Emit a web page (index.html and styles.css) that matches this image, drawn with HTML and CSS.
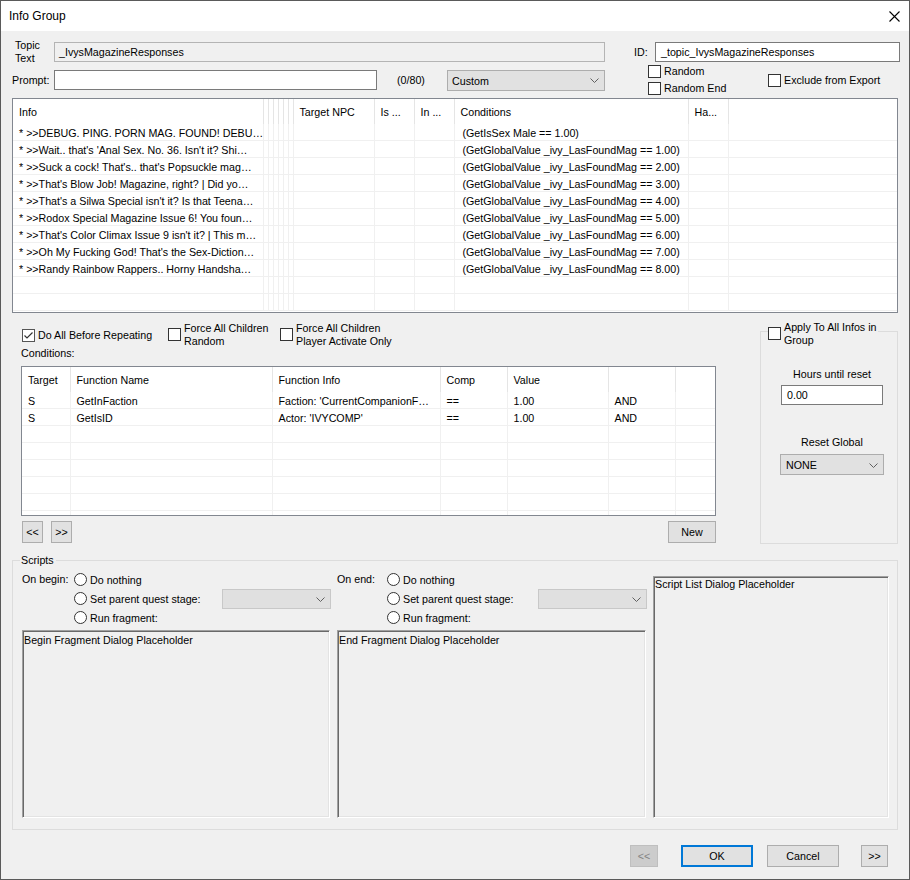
FILE: index.html
```html
<!DOCTYPE html>
<html lang="en">
<head>
    <meta charset="UTF-8">
    <title>Info Group</title>
    <link rel="stylesheet" href="styles.css">
</head>
<body>

<div class="window">
    <div class="titlebar">
        <span>Info Group</span>
        <svg class="close-icon" width="11" height="11" viewBox="0 0 11 11">
            <path d="M0.5 0.5 L10.5 10.5 M10.5 0.5 L0.5 10.5" stroke="#000" stroke-width="1.1" fill="none"/>
        </svg>
    </div>

    <div class="topic-row">
        <label class="topic-label">Topic<br>Text</label>
        <div class="textbox readonly topic-box">_IvysMagazineResponses</div>
        <label class="id-label">ID:</label>
        <div class="textbox id-box">_topic_IvysMagazineResponses</div>
    </div>

    <div class="prompt-row">
        <label class="prompt-label">Prompt:</label>
        <div class="textbox prompt-box"></div>
        <span class="counter">(0/80)</span>
        <div class="combo custom-combo">
            <span>Custom</span>
            <svg class="arrow" width="9" height="5" viewBox="0 0 9 5"><path d="M0.5 0.5 L4.5 4.5 L8.5 0.5" stroke="#606060" fill="none"/></svg>
        </div>
        <div class="random-col">
            <div class="option"><span class="check"></span>Random</div>
            <div class="option"><span class="check"></span>Random End</div>
        </div>
        <div class="option"><span class="check"></span>Exclude from Export</div>
    </div>

    <!-- Info list -->
    <div class="listview info-list">
        <table>
            <colgroup>
                <col style="width:250px"><col style="width:5px"><col style="width:5px"><col style="width:5px">
                <col style="width:5px"><col style="width:5px"><col style="width:5px"><col style="width:81px">
                <col style="width:40px"><col style="width:40px"><col style="width:234px"><col style="width:40px"><col>
            </colgroup>
            <thead>
                <tr>
                    <th>Info</th><th></th><th></th><th></th><th></th><th></th><th></th>
                    <th>Target NPC</th><th>Is ...</th><th>In ...</th><th>Conditions</th><th>Ha...</th><th class="filler"></th>
                </tr>
            </thead>
            <tbody id="info-rows"></tbody>
        </table>
    </div>

    <div class="middle">
        <div class="cond-col">
            <div class="flags">
                <div class="option flag-one"><span class="check checked"><svg width="11" height="11" viewBox="0 0 11 11"><path d="M1.5 5.5 L4 8 L9.5 2.5" stroke="#333" stroke-width="1.2" fill="none"/></svg></span>Do All Before Repeating</div>
                <div class="option multi flag-two"><span class="check"></span><span>Force All Children<br>Random</span></div>
                <div class="option multi"><span class="check"></span><span>Force All Children<br>Player Activate Only</span></div>
            </div>
            <div class="cond-label">Conditions:</div>

            <div class="listview cond-list">
                <table>
                    <colgroup>
                        <col style="width:48px"><col style="width:202px"><col style="width:168px">
                        <col style="width:67px"><col style="width:101px"><col style="width:67px"><col>
                    </colgroup>
                    <thead>
                        <tr>
                            <th>Target</th><th>Function Name</th><th>Function Info</th><th>Comp</th><th>Value</th><th></th><th class="filler"></th>
                        </tr>
                    </thead>
                    <tbody id="cond-rows"></tbody>
                </table>
            </div>

            <div class="cond-buttons">
                <button class="btn small-btn">&lt;&lt;</button>
                <button class="btn small-btn">&gt;&gt;</button>
                <button class="btn new-btn">New</button>
            </div>
        </div>

        <div class="reset-group">
            <div class="group-legend option multi"><span class="check"></span><span>Apply To All Infos in<br>Group</span></div>
            <div class="reset-inner">
                <div class="center-label">Hours until reset</div>
                <div class="textbox hours-box">0.00</div>
                <div class="center-label reset-label">Reset Global</div>
                <div class="combo none-combo">
                    <span>NONE</span>
                    <svg class="arrow" width="9" height="5" viewBox="0 0 9 5"><path d="M0.5 0.5 L4.5 4.5 L8.5 0.5" stroke="#606060" fill="none"/></svg>
                </div>
            </div>
        </div>
    </div>

    <!-- Scripts -->
    <div class="scripts-group">
        <div class="group-title">Scripts</div>
        <div class="scripts-body">
            <div class="half begin-half">
                <div class="script-controls">
                    <span class="on-label begin-label">On begin:</span>
                    <div class="radio-col">
                        <div class="radio-row"><span class="radio"></span>Do nothing</div>
                        <div class="radio-row"><span class="radio"></span>Set parent quest stage:
                            <div class="combo stage-combo disabled">
                                <span></span>
                                <svg class="arrow" width="9" height="5" viewBox="0 0 9 5"><path d="M0.5 0.5 L4.5 4.5 L8.5 0.5" stroke="#606060" fill="none"/></svg>
                            </div>
                        </div>
                        <div class="radio-row"><span class="radio"></span>Run fragment:</div>
                    </div>
                </div>
                <div class="sunken fragment-box begin-box">Begin Fragment Dialog Placeholder</div>
            </div>

            <div class="half end-half">
                <div class="script-controls">
                    <span class="on-label end-label">On end:</span>
                    <div class="radio-col">
                        <div class="radio-row"><span class="radio"></span>Do nothing</div>
                        <div class="radio-row"><span class="radio"></span>Set parent quest stage:
                            <div class="combo stage-combo disabled">
                                <span></span>
                                <svg class="arrow" width="9" height="5" viewBox="0 0 9 5"><path d="M0.5 0.5 L4.5 4.5 L8.5 0.5" stroke="#606060" fill="none"/></svg>
                            </div>
                        </div>
                        <div class="radio-row"><span class="radio"></span>Run fragment:</div>
                    </div>
                </div>
                <div class="sunken fragment-box end-box">End Fragment Dialog Placeholder</div>
            </div>

            <div class="sunken script-list">Script List Dialog Placeholder</div>
        </div>
    </div>

    <div class="footer">
        <button class="btn prev-btn" disabled>&lt;&lt;</button>
        <button class="btn ok-btn">OK</button>
        <button class="btn cancel-btn">Cancel</button>
        <button class="btn next-btn">&gt;&gt;</button>
    </div>
</div>

<script>
    const infos = [
        ["* >>DEBUG. PING. PORN MAG. FOUND! DEBU\u2026", "(GetIsSex Male == 1.00)"],
        ["* >>Wait.. that's 'Anal Sex. No. 36. Isn't it? Shi\u2026", "(GetGlobalValue _ivy_LasFoundMag == 1.00)"],
        ["* >>Suck a cock! That's.. that's Popsuckle mag\u2026", "(GetGlobalValue _ivy_LasFoundMag == 2.00)"],
        ["* >>That's Blow Job! Magazine, right? | Did yo\u2026", "(GetGlobalValue _ivy_LasFoundMag == 3.00)"],
        ["* >>That's a Silwa Special isn't it? Is that Teena\u2026", "(GetGlobalValue _ivy_LasFoundMag == 4.00)"],
        ["* >>Rodox Special Magazine Issue 6! You foun\u2026", "(GetGlobalValue _ivy_LasFoundMag == 5.00)"],
        ["* >>That's Color Climax Issue 9 isn't it? | This m\u2026", "(GetGlobalValue _ivy_LasFoundMag == 6.00)"],
        ["* >>Oh My Fucking God! That's the Sex-Diction\u2026", "(GetGlobalValue _ivy_LasFoundMag == 7.00)"],
        ["* >>Randy Rainbow Rappers.. Horny Handsha\u2026", "(GetGlobalValue _ivy_LasFoundMag == 8.00)"]
    ];

    const conditions = [
        ["S", "GetInFaction", "Faction: 'CurrentCompanionF\u2026", "==", "1.00", "AND"],
        ["S", "GetIsID", "Actor: 'IVYCOMP'", "==", "1.00", "AND"]
    ];

    // Fill the info list, padding with empty rows
    const infoBody = document.getElementById('info-rows');
    for (let i = 0; i < 11; i++) {
        const row = infos[i] || ["", ""];
        const tr = document.createElement('tr');
        let html = `<td>${row[0]}</td>`;
        for (let j = 0; j < 9; j++) html += '<td></td>';
        html += `<td class="cond-text">${row[1]}</td><td></td><td class="filler"></td>`;
        tr.innerHTML = html;
        infoBody.appendChild(tr);
    }

    // Fill the conditions list
    const condBody = document.getElementById('cond-rows');
    for (let i = 0; i < 8; i++) {
        const row = conditions[i] || ["", "", "", "", "", ""];
        const tr = document.createElement('tr');
        tr.innerHTML = row.map(cell => `<td>${cell}</td>`).join('') + '<td class="filler"></td>';
        condBody.appendChild(tr);
    }
</script>

</body>
</html>
```

FILE: styles.css
```css
body {
    margin: 0;
    font-family: "Liberation Sans", Arial, sans-serif;
    font-size: 10.7px;
    color: #000;
    background-color: #f0f0f0;
}

.window {
    width: 910px;
    height: 880px;
    box-sizing: border-box;
    border: 1px solid #5a5a5a;
    background-color: #f0f0f0;
    overflow: hidden;
}

.titlebar {
    height: 30px;
    background-color: #fff;
    display: flex;
    align-items: center;
    justify-content: space-between;
    padding: 0 9px 0 8px;
    font-size: 12px;
}

/* generic controls */
.textbox {
    box-sizing: border-box;
    height: 20px;
    border: 1px solid #7a7a7a;
    background-color: #fff;
    display: flex;
    align-items: center;
    padding-left: 4px;
    white-space: nowrap;
}

.textbox.readonly {
    background-color: #f0f0f0;
    border-color: #b4b4b4;
}

.combo {
    box-sizing: border-box;
    height: 21px;
    border: 1px solid #adadad;
    background-color: #e1e1e1;
    display: flex;
    align-items: center;
    justify-content: space-between;
    padding: 1px 5px 0 4px;
}

.combo.disabled {
    background-color: #e0e0e0;
    border-color: #c8c8c8;
}

.option {
    display: flex;
    align-items: center;
    line-height: 13px;
    white-space: nowrap;
}

.option.multi {
    align-items: flex-start;
}

.option.multi .check {
    margin-top: 6px;
}

.check {
    box-sizing: border-box;
    width: 13px;
    height: 13px;
    border: 1px solid #333;
    background-color: #fff;
    margin-right: 3px;
    flex-shrink: 0;
    display: flex;
}

.check.checked {
    border-color: #555;
}

.radio {
    box-sizing: border-box;
    width: 13px;
    height: 13px;
    border: 1px solid #333;
    border-radius: 50%;
    background-color: #fff;
    margin-right: 3px;
    flex-shrink: 0;
}

.btn {
    box-sizing: border-box;
    height: 22px;
    border: 1px solid #adadad;
    background-color: #e1e1e1;
    font-family: inherit;
    font-size: 10.7px;
    color: #000;
    padding: 0;
}

/* top rows */
.topic-row {
    margin-top: 11px;
    height: 20px;
    display: flex;
    align-items: center;
    padding-left: 14px;
}

.topic-label {
    width: 39px;
    line-height: 13px;
}

.topic-box {
    width: 551px;
}

.id-label {
    margin-left: 29px;
    width: 21px;
}

.id-box {
    width: 245px;
    padding-left: 5px;
}

.prompt-row {
    margin-top: 3px;
    height: 30px;
    display: flex;
    align-items: center;
    padding-left: 11px;
}

.prompt-label {
    width: 42px;
}

.prompt-box {
    width: 323px;
}

.counter {
    margin-left: 20px;
    width: 50px;
}

.custom-combo {
    width: 158px;
}

.random-col {
    margin-left: 43px;
    width: 120px;
    display: flex;
    flex-direction: column;
    gap: 4px;
}

/* list views */
.listview {
    box-sizing: border-box;
    border: 1px solid #828790;
    background-color: #fff;
    overflow: hidden;
}

.listview table {
    border-collapse: collapse;
    table-layout: fixed;
    width: 100%;
}

.listview th {
    height: 25px;
    font-weight: normal;
    text-align: left;
    padding: 0 6px;
    border-right: 1px solid #e5e5e5;
    white-space: nowrap;
    overflow: hidden;
}

.listview td {
    height: 14px;
    padding: 2px 6px 0;
    border-right: 1px solid #f0f0f0;
    border-bottom: 1px solid #f0f0f0;
    white-space: nowrap;
    overflow: hidden;
}

.listview th.filler,
.listview td.filler {
    border-right: none;
}

.listview td.cond-text {
    padding-left: 8px;
}

.info-list {
    margin: 3px 0 0 11px;
    width: 886px;
    height: 215px;
}

/* middle section */
.middle {
    margin-top: 8px;
    display: flex;
    padding-left: 20px;
}

.cond-col {
    width: 695px;
    padding-top: 2px;
}

.flags {
    height: 24px;
    display: flex;
    align-items: center;
    margin-left: 1px;
}

.flag-one {
    width: 146px;
}

.flag-two {
    width: 112px;
}

.cond-label {
    line-height: 13px;
}

.cond-list {
    margin-top: 6px;
    height: 150px;
}

.cond-list th {
    height: 24px;
    padding-top: 1px;
}

.cond-buttons {
    margin-top: 5px;
    display: flex;
    padding-left: 1px;
}

.small-btn {
    width: 21px;
    margin-right: 8px;
}

.new-btn {
    width: 48px;
    margin-left: auto;
}

.reset-group {
    position: relative;
    margin: 10px 0 0 44px;
    width: 138px;
    height: 213px;
    box-sizing: border-box;
    border: 1px solid #dcdcdc;
}

.group-legend {
    position: absolute;
    top: -11px;
    left: 7px;
    background-color: #f0f0f0;
    padding-right: 2px;
}

.reset-inner {
    margin-left: 20px;
    width: 102px;
    padding-top: 36px;
}

.center-label {
    text-align: center;
    line-height: 13px;
}

.hours-box {
    margin-top: 4px;
    padding-left: 5px;
}

.reset-label {
    margin-top: 31px;
}

.none-combo {
    margin: 5px 0 0 -1px;
    width: 104px;
    padding-left: 5px;
}

/* scripts */
.scripts-group {
    position: relative;
    margin: 16px 0 0 11px;
    width: 886px;
    height: 270px;
    box-sizing: border-box;
    border: 1px solid #dcdcdc;
}

.group-title {
    position: absolute;
    top: -7px;
    left: 7px;
    background-color: #f0f0f0;
    line-height: 13px;
    padding: 0 2px 0 1px;
}

.scripts-body {
    display: flex;
    padding: 9px 8px 0 9px;
}

.begin-half {
    width: 309px;
}

.end-half {
    width: 310px;
    margin-left: 6px;
}

.script-controls {
    display: flex;
}

.on-label {
    line-height: 19px;
}

.begin-label {
    width: 52px;
}

.end-label {
    width: 50px;
}

.radio-col {
    flex: 1;
}

.radio-row {
    height: 19px;
    display: flex;
    align-items: center;
    white-space: nowrap;
}

.stage-combo {
    margin-left: auto;
    width: 109px;
    height: 20px;
}

.sunken {
    box-sizing: border-box;
    border: 1px solid;
    border-color: #a0a0a0 #fff #fff #a0a0a0;
    box-shadow: inset 1px 1px 0 #696969, inset -1px -1px 0 #e3e3e3;
    padding: 3px 0 0 1px;
    white-space: nowrap;
}

.fragment-box {
    margin-top: 3px;
    height: 188px;
}

.begin-box {
    width: 308px;
}

.end-box {
    width: 309px;
}

.script-list {
    margin: 6px 0 0 6px;
    width: 236px;
    height: 242px;
    padding-top: 1px;
}

/* footer buttons */
.footer {
    margin-top: 15px;
    display: flex;
    justify-content: flex-end;
    padding-right: 21px;
}

.prev-btn {
    width: 28px;
    margin-right: 23px;
    background-color: #cccccc;
    border-color: #bfbfbf;
    color: #838383;
}

.ok-btn {
    width: 72px;
    margin-right: 14px;
    border: 2px solid #0078d7;
}

.cancel-btn {
    width: 72px;
    margin-right: 22px;
}

.next-btn {
    width: 27px;
}
```
